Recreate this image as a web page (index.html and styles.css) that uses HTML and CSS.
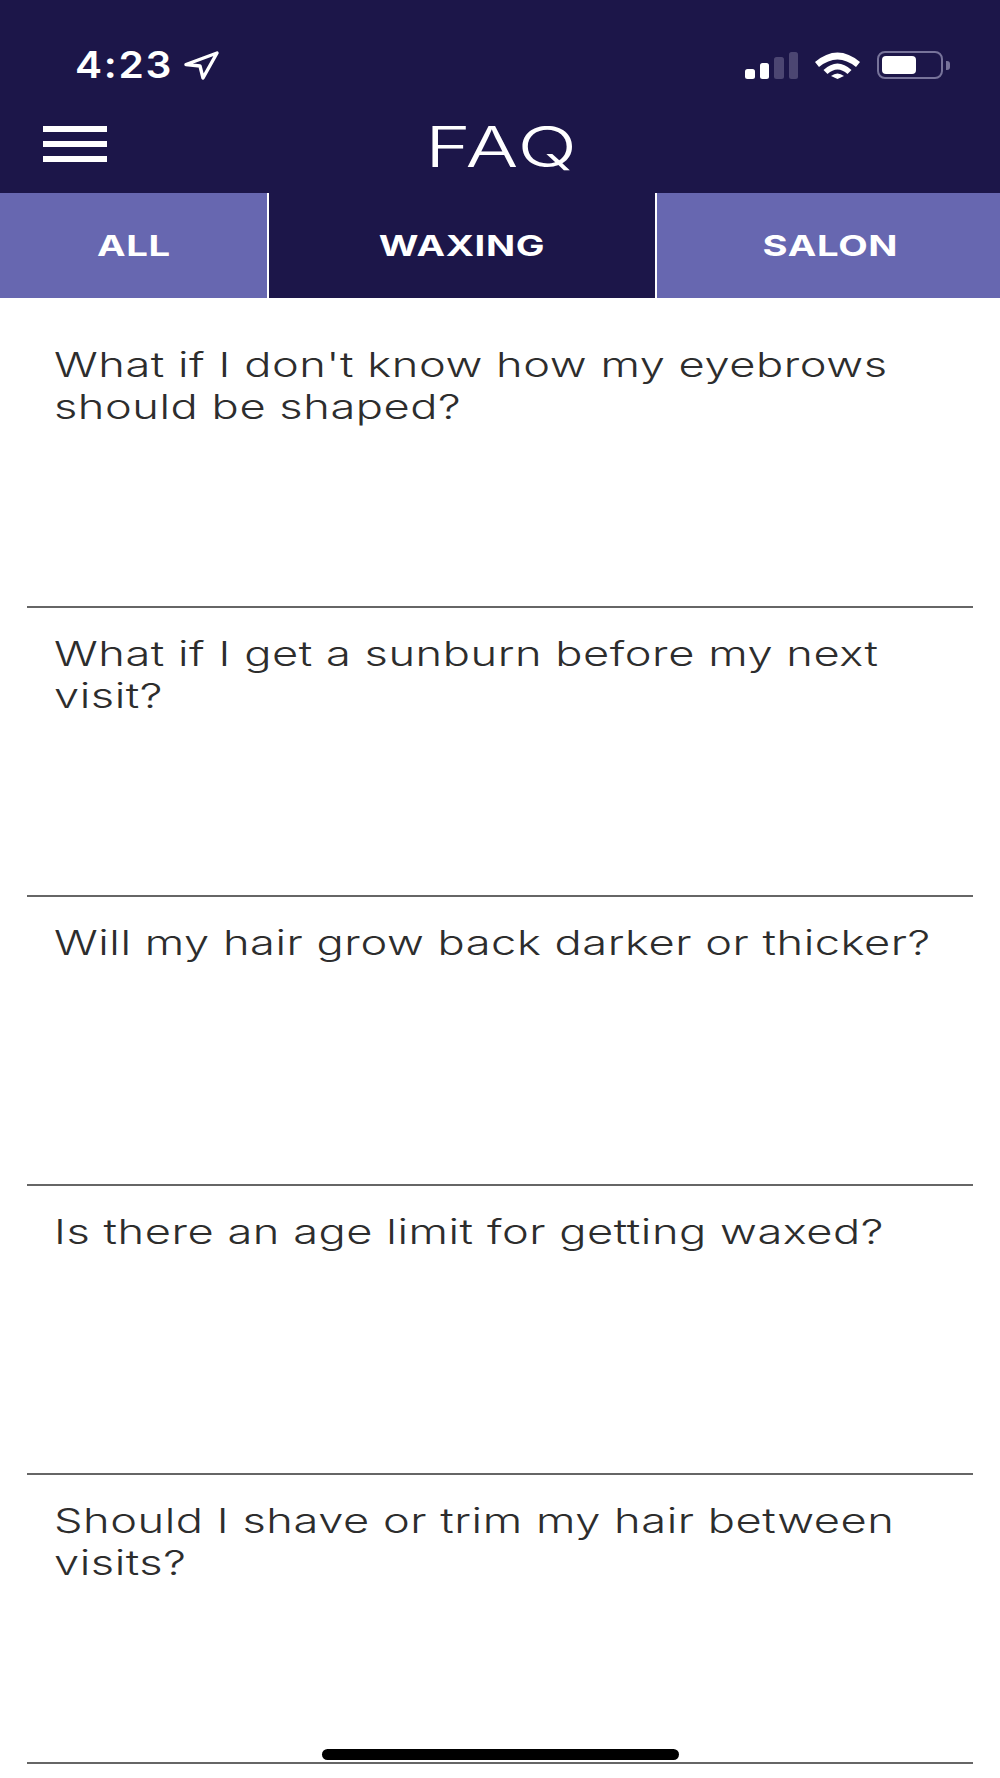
FILE: index.html
```html
<!DOCTYPE html>
<html lang="en">
<head>
    <meta charset="UTF-8">
    <meta name="viewport" content="width=device-width, initial-scale=1.0">
    <title>FAQ</title>
    <link rel="stylesheet" href="styles.css">
</head>
<body>
    <header class="top">
        <!-- Status bar -->
        <div class="status">
            <div class="status-left">
                <span class="time">4:23</span>
                <svg class="arrow" viewBox="0 0 35 29" width="35" height="29">
                    <path d="M2 13.500 L33 2 L19 27 L16 15 Z" fill="none" stroke="#fff" stroke-width="3.400" stroke-linejoin="round"/>
                </svg>
            </div>
            <div class="status-right">
                <div class="signal">
                    <span class="bar bar-1"></span>
                    <span class="bar bar-2"></span>
                    <span class="bar bar-3"></span>
                    <span class="bar bar-4"></span>
                </div>
                <svg class="wifi" viewBox="0 0 45 27" width="45" height="27">
                    <path d="M0 10 Q22.500 -9 45 10 L41 15 Q22.500 0 4 15 Z" fill="#fff"/>
                    <path d="M8.500 18 Q22.500 5 36.500 18 L32.500 22 Q22.500 13 12.500 22 Z" fill="#fff"/>
                    <path d="M16 24 Q22.500 19 29 24 L22.500 27 Z" fill="#fff"/>
                </svg>
                <div class="battery">
                    <div class="battery-level"></div>
                </div>
                <span class="battery-cap"></span>
            </div>
        </div>

        <!-- Title row -->
        <div class="nav">
            <button class="menu" aria-label="Menu">
                <span></span>
                <span></span>
                <span></span>
            </button>
            <h1>FAQ</h1>
        </div>

        <!-- Category tabs -->
        <nav class="tabs">
            <a class="tab tab-all"><span>ALL</span></a>
            <a class="tab tab-waxing active"><span>WAXING</span></a>
            <a class="tab tab-salon"><span>SALON</span></a>
        </nav>
    </header>

    <ul class="faq">
        <li><p>What if I don't know how my eyebrows should be shaped?</p></li>
        <li><p>What if I get a sunburn before my next visit?</p></li>
        <li><p>Will my hair grow back darker or thicker?</p></li>
        <li><p>Is there an age limit for getting waxed?</p></li>
        <li><p>Should I shave or trim my hair between visits?</p></li>
    </ul>

    <div class="home-bar"></div>
</body>
</html>
```

FILE: styles.css
```css
body {
    font-family: Inter, "Liberation Sans", sans-serif;
    background-color: #fff;
    margin: 0;
    padding: 0;
    min-height: 1778px;
    position: relative;
}

.top {
    background-color: #1c1649;
    color: #fff;
}

.status {
    display: flex;
    justify-content: space-between;
    align-items: center;
    height: 30px;
    padding: 50px 50px 20px 75px;
}

.status-left {
    display: flex;
    align-items: center;
    height: 30px;
}

.time {
    display: inline-block;
    font-size: 37px;
    font-weight: 600;
    line-height: 30px;
    letter-spacing: 1.5px;
    transform: scaleX(1.1);
    transform-origin: left center;
    margin-right: 20px;
}

.status-right {
    display: flex;
    align-items: center;
    height: 30px;
}

.signal {
    display: flex;
    align-items: flex-end;
    gap: 5px;
    height: 27px;
    margin-right: 17px;
}

.bar {
    width: 9.500px;
    border-radius: 2.500px;
    background-color: #fff;
}

.bar-1 { height: 10px; }
.bar-2 { height: 16px; }
.bar-3 { height: 22px; background-color: #4c4672; }
.bar-4 { height: 27px; background-color: #4c4672; }

.wifi {
    margin-right: 17px;
}

.battery {
    box-sizing: border-box;
    width: 66px;
    height: 28px;
    padding: 3px;
    border: 2px solid #77739a;
    border-radius: 8px;
}

.battery-level {
    width: 34px;
    height: 100%;
    background-color: #fff;
    border-radius: 4px;
}

.battery-cap {
    width: 4px;
    height: 9px;
    margin-left: 3px;
    background-color: #77739a;
    border-radius: 0 3px 3px 0;
}

.nav {
    height: 93px;
    padding-left: 4px;
    position: relative;
    display: flex;
    align-items: center;
    justify-content: center;
}

.menu {
    position: absolute;
    left: 43px;
    top: 26px;
    width: 64px;
    display: flex;
    flex-direction: column;
    gap: 9px;
    padding: 0;
    background: none;
    border: none;
}

.menu span {
    display: block;
    height: 6px;
    background-color: #fff;
}

h1 {
    margin: 0;
    font-size: 56px;
    font-weight: 300;
    line-height: 60px;
    letter-spacing: 1px;
    transform: scaleX(1.4);
}

.tabs {
    display: flex;
    height: 105px;
}

.tab {
    display: flex;
    align-items: center;
    justify-content: center;
    font-size: 29px;
    font-weight: 700;
    letter-spacing: 0.5px;
    background-color: #6767b0;
}

.tab span {
    transform: scaleX(1.32);
}

.tab-all {
    width: 267px;
    border-right: 2px solid #fff;
}

.tab-waxing {
    width: 386px;
    border-right: 2px solid #fff;
}

.tab-salon {
    flex: 1;
    padding-left: 4px;
}

.tab.active {
    background-color: #1c1649;
}

.faq {
    list-style: none;
    margin: 0 27px;
    padding: 0;
}

.faq li {
    box-sizing: border-box;
    height: 289px;
    padding: 25px 27px 0;
    border-bottom: 2px solid #666;
}

.faq li:first-child {
    height: 310px;
    padding-top: 46px;
}

/* the wide question type: Inter stretched sideways, wrapped at the unscaled width */
.faq p {
    width: 670px;
    margin: 0;
    font-size: 34px;
    font-weight: 300;
    line-height: 42px;
    letter-spacing: 0.4px;
    color: #2d2d2d;
    transform: scaleX(1.33);
    transform-origin: left top;
}

.home-bar {
    position: absolute;
    left: 322px;
    top: 1749px;
    width: 357px;
    height: 11px;
    background-color: #000;
    border-radius: 6px;
}
```
